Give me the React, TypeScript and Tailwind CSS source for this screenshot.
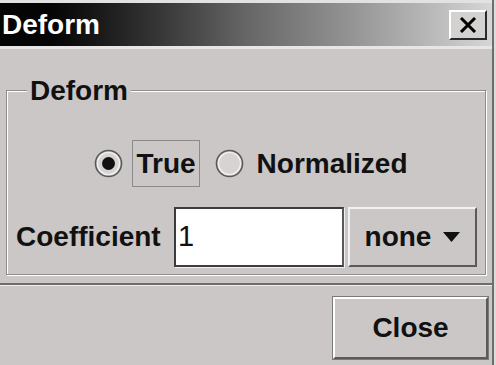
import { useState } from "react";

const font = "font-['Liberation_Sans',Arial,sans-serif]";

function Radio({ checked }: { checked: boolean }) {
  return (
    <svg width="29" height="29" viewBox="0 0 29 29" className="shrink-0">
      <circle cx="14.5" cy="14.5" r="13" fill="#d6d3d2" stroke="#5a5a5a" strokeWidth="1.6" />
      <circle cx="14.5" cy="14.5" r="11" fill="none" stroke="#f2f2f2" strokeWidth="1.2" />
      {checked && <circle cx="14.5" cy="14.5" r="6.5" fill="#111" />}
    </svg>
  );
}

export default function App() {
  const [mode, setMode] = useState<"true" | "normalized">("true");
  const [coef, setCoef] = useState("1");

  return (
    <div className={`w-[496px] h-[365px] bg-[#dcdcdc] pr-[2px] overflow-hidden ${font}`}>
      <div className="h-full flex flex-col bg-[#cac7c6] border-r-2 border-[#6e6e6e]">
        {/* title bar */}
        <div className="border-t-[3px] border-[#e2e2e2] h-[46px] bg-linear-to-r from-[#050505] from-10% via-[#666] to-[#d6d6d6] flex items-center justify-between pl-[2px] pr-[5px]">
          <span className="text-white font-bold text-[28px] leading-none">Deform</span>
          <button className="w-[38px] h-[30px] bg-[#d4d2d0] border-2 border-t-white border-l-white border-r-[#2a2a2a] border-b-[#2a2a2a] flex items-center justify-center">
            <svg width="18" height="16" viewBox="0 0 18 16">
              <path d="M2 1 L16 15 M16 1 L2 15" stroke="#000" strokeWidth="3" />
            </svg>
          </button>
        </div>
        <div className="h-[3px] bg-[#e6e6e6]" />

        {/* group */}
        <fieldset className="mt-[26px] ml-[6px] mr-[9px] border border-[#8c8c8c] shadow-[inset_1px_1px_0_#fff,1px_1px_0_#fff] px-[8px] pb-[7px]">
          <legend className="ml-[12px] px-[3px] bg-[#cac7c6] font-bold text-[28px] leading-[31px] text-[#111]">
            Deform
          </legend>
          <div className="mt-[34px] h-[47px] flex items-center justify-center pl-[10px]">
            <button onClick={() => setMode("true")} className="flex items-center gap-[9px]">
              <Radio checked={mode === "true"} />
              <span className="h-[47px] px-[3px] border border-[#8a8a8a] flex items-center font-bold text-[28px] text-[#111]">
                True
              </span>
            </button>
            <button onClick={() => setMode("normalized")} className="ml-[15px] flex items-center gap-[13px]">
              <Radio checked={mode === "normalized"} />
              <span className="font-bold text-[28px] text-[#111]">Normalized</span>
            </button>
          </div>
          <div className="mt-[20px] h-[60px] flex items-stretch">
            <span className="self-center font-bold text-[28px] text-[#111] w-[159px] pl-[1px]">
              Coefficient
            </span>
            <input
              value={coef}
              onChange={(e) => setCoef(e.target.value)}
              className="w-[170px] bg-white border-2 border-t-[#3c3c3c] border-l-[#3c3c3c] border-r-[#5a5a5a] border-b-[#3c3c3c] shadow-[1px_1px_0_#f0f0f0] px-[2px] text-[29px] text-[#111] outline-none"
            />
            <button className="ml-[4px] w-[129px] border-2 border-t-[#f2f2f2] border-l-[#f2f2f2] border-r-[#5a5a5a] border-b-[#5a5a5a] flex items-center justify-center gap-[12px]">
              <span className="font-bold text-[28px] text-[#111]">none</span>
              <svg width="17" height="10" viewBox="0 0 17 10">
                <path d="M0 0 H17 L8.5 10 Z" fill="#111" />
              </svg>
            </button>
          </div>
        </fieldset>

        {/* separator */}
        <div className="mt-[8px] h-[2px] bg-[#6e6e6e] border-b border-[#f0f0f0] box-content" />

        {/* footer */}
        <div className="flex-1 flex justify-end items-start pt-[11px] pr-[4px]">
          <button className="w-[155px] h-[62px] bg-[#cac7c6] border-2 border-t-white border-l-white border-r-[#5a5a5a] border-b-[#5a5a5a] outline outline-1 outline-[#7a7a7a] font-bold text-[28px] text-[#111]">
            Close
          </button>
        </div>
      </div>
    </div>
  );
}
